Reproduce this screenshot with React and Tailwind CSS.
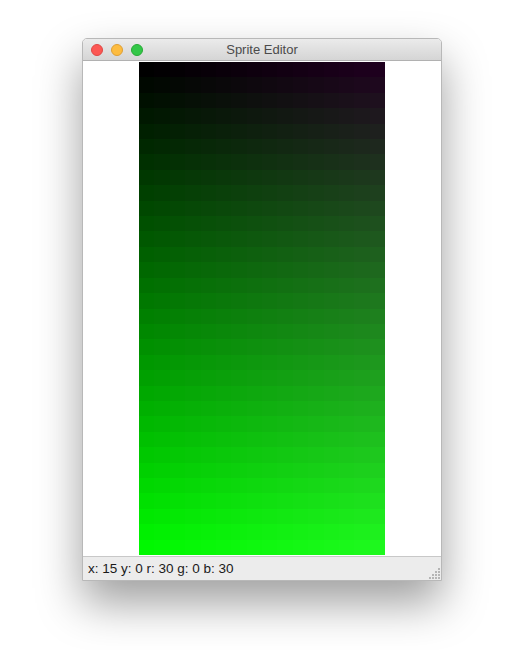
import React from "react";

const COLS = 16;
const ROWS = 32;

function SpriteCanvas() {
  const cells = [];
  for (let y = 0; y < ROWS; y++) {
    for (let x = 0; x < COLS; x++) {
      const r = x * 2;
      const g = y * 8;
      const b = x * 2;
      cells.push(<div key={`${x}-${y}`} style={{ backgroundColor: `rgb(${r},${g},${b})` }} />);
    }
  }
  return (
    <div className="grid h-[493px] w-[246px] grid-cols-[repeat(16,1fr)] grid-rows-[repeat(32,1fr)]">
      {cells}
    </div>
  );
}

function Grip() {
  const dots = [
    [9, 1],
    [6, 4], [9, 4],
    [3, 7], [6, 7], [9, 7],
    [0, 10], [3, 10], [6, 10], [9, 10],
  ];
  return (
    <svg width="11" height="12" viewBox="0 0 11 12" className="shrink-0">
      {dots.map(([x, y], i) => (
        <rect key={i} x={x} y={y} width="2" height="2" fill="#b5b5b5" />
      ))}
    </svg>
  );
}

export default function App() {
  return (
    <div className="min-h-[650px] w-[525px] bg-white pl-[82px] pt-[38px] font-['Liberation_Sans',Arial,sans-serif]">
      <div className="flex w-[360px] flex-col overflow-hidden rounded-t-[5px] border border-[#b8b8b8] bg-white shadow-[0_22px_45px_rgba(0,0,0,0.38)]">
        <div className="relative flex h-[22px] items-center bg-gradient-to-b from-[#ebebeb] to-[#d5d5d5] border-b border-[#b1b1b1]">
          <div className="flex items-center gap-[8px] pl-[8px]">
            <span className="h-[12px] w-[12px] rounded-full bg-[#fc5753] border border-[#df4744]" />
            <span className="h-[12px] w-[12px] rounded-full bg-[#fdbc40] border border-[#de9f34]" />
            <span className="h-[12px] w-[12px] rounded-full bg-[#33c748] border border-[#27aa35]" />
          </div>
          <div className="absolute inset-0 flex items-center justify-center text-[13px] text-[#4b4b4b]">
            Sprite Editor
          </div>
        </div>
        <div className="flex justify-center bg-white pt-[1px] pb-[1px]">
          <SpriteCanvas />
        </div>
        <div className="flex h-[24px] items-center justify-between border-t border-[#c8c8c8] bg-[#ececec] pl-[5px] pr-[1px]">
          <span className="pt-[1px] text-[13.5px] text-[#1a1a1a]">x: 15 y: 0 r: 30 g: 0 b: 30</span>
          <div className="self-end pb-[1px]">
            <Grip />
          </div>
        </div>
      </div>
    </div>
  );
}
